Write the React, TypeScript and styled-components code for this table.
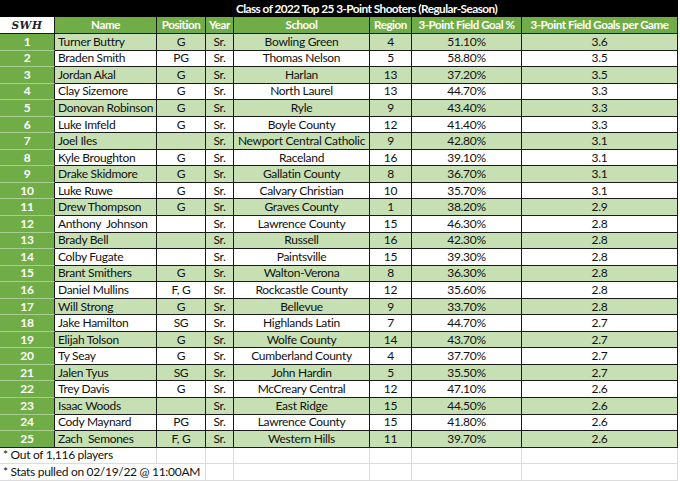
import React from "react";
import styled, { createGlobalStyle, css } from "styled-components";

const Global = createGlobalStyle`
  html, body { margin: 0; padding: 0; background: #ffffff; }
  body { font-family: "Lato", "Open Sans", "Liberation Sans", sans-serif; }
`;

const COLS = "55px 102px 49px 28px 136px 42px 110px 156px";
const ROWS = "17px 17px repeat(25, 16.56px) 16.5px 16.5px";

const Sheet = styled.div`
  display: grid;
  grid-template-columns: ${COLS};
  grid-template-rows: ${ROWS};
  width: 680px;
  height: 481px;
  overflow: hidden;
  font-size: 12px;
  letter-spacing: -0.3px;
  color: #111;
`;

type CellProps = {
  $bg?: string;
  $align?: "left" | "center";
  $bold?: boolean;
  $color?: string;
  $span?: number;
  $light?: boolean;
  $rankSep?: boolean;
};

const Cell = styled.div<CellProps>`
  box-sizing: border-box;
  display: flex;
  align-items: center;
  justify-content: ${(p) => (p.$align === "left" ? "flex-start" : "center")};
  padding: 0 ${(p) => (p.$align === "left" ? "3px" : "0")};
  background: ${(p) => p.$bg || "#ffffff"};
  color: ${(p) => p.$color || "#111"};
  font-weight: ${(p) => (p.$bold ? 700 : 400)};
  white-space: pre;
  overflow: visible;
  line-height: 1;
  border-right: 1px solid #1a1a1a;
  border-bottom: 1px solid ${(p) => (p.$rankSep ? "#a8cf90" : "#1a1a1a")};
  ${(p) => p.$span && css`grid-column: span ${p.$span};`}
  ${(p) =>
    p.$light &&
    css`
      border-right: 1px solid #dcdcdc;
      border-bottom: 1px solid #dcdcdc;
    `}
`;

const HeadCell = styled(Cell)`
  background: #70ad47;
  color: #ffffff;
  font-weight: 700;
  font-size: 11.6px;
  letter-spacing: -0.45px;
`;

const RankCell = styled(Cell)`
  background: #70ad47;
  color: #ffffff;
  font-weight: 700;
`;

const TitleBar = styled.div`
  box-sizing: border-box;
  grid-column: 2 / -1;
  background: #000;
  color: #fff;
  font-weight: 700;
  font-size: 11.8px;
  letter-spacing: -0.55px;
  display: flex;
  align-items: center;
  justify-content: center;
  border-bottom: 1px solid #000;
`;

const TitleLead = styled.div`
  background: #000;
`;

const Logo = styled(Cell)`
  font-family: "DejaVu Serif", "Liberation Serif", serif;
  font-style: italic;
  font-weight: 700;
  font-size: 10.5px;
  letter-spacing: 0.6px;
  color: #222;
  background: #fff;
`;

const Note = styled(Cell)`
  justify-content: flex-start;
  padding-left: 3px;
`;

const LIGHT = "#c6e0b4";

type Row = [string, string, string, string, number, string, string];

const data: Row[] = [
  ["Turner Buttry", "G", "Sr.", "Bowling Green", 4, "51.10%", "3.6"],
  ["Braden Smith", "PG", "Sr.", "Thomas Nelson", 5, "58.80%", "3.5"],
  ["Jordan Akal", "G", "Sr.", "Harlan", 13, "37.20%", "3.5"],
  ["Clay Sizemore", "G", "Sr.", "North Laurel", 13, "44.70%", "3.3"],
  ["Donovan Robinson", "G", "Sr.", "Ryle", 9, "43.40%", "3.3"],
  ["Luke Imfeld", "G", "Sr.", "Boyle County", 12, "41.40%", "3.3"],
  ["Joel Iles", "", "Sr.", "Newport Central Catholic", 9, "42.80%", "3.1"],
  ["Kyle Broughton", "G", "Sr.", "Raceland", 16, "39.10%", "3.1"],
  ["Drake Skidmore", "G", "Sr.", "Gallatin County", 8, "36.70%", "3.1"],
  ["Luke Ruwe", "G", "Sr.", "Calvary Christian", 10, "35.70%", "3.1"],
  ["Drew Thompson", "G", "Sr.", "Graves County", 1, "38.20%", "2.9"],
  ["Anthony  Johnson", "", "Sr.", "Lawrence County", 15, "46.30%", "2.8"],
  ["Brady Bell", "", "Sr.", "Russell", 16, "42.30%", "2.8"],
  ["Colby Fugate", "", "Sr.", "Paintsville", 15, "39.30%", "2.8"],
  ["Brant Smithers", "G", "Sr.", "Walton-Verona", 8, "36.30%", "2.8"],
  ["Daniel Mullins", "F, G", "Sr.", "Rockcastle County", 12, "35.60%", "2.8"],
  ["Will Strong", "G", "Sr.", "Bellevue", 9, "33.70%", "2.8"],
  ["Jake Hamilton", "SG", "Sr.", "Highlands Latin", 7, "44.70%", "2.7"],
  ["Elijah Tolson", "G", "Sr.", "Wolfe County", 14, "43.70%", "2.7"],
  ["Ty Seay", "G", "Sr.", "Cumberland County", 4, "37.70%", "2.7"],
  ["Jalen Tyus", "SG", "Sr.", "John Hardin", 5, "35.50%", "2.7"],
  ["Trey Davis", "G", "Sr.", "McCreary Central", 12, "47.10%", "2.6"],
  ["Isaac Woods", "", "Sr.", "East Ridge", 15, "44.50%", "2.6"],
  ["Cody Maynard", "PG", "Sr.", "Lawrence County", 15, "41.80%", "2.6"],
  ["Zach  Semones", "F, G", "Sr.", "Western Hills", 11, "39.70%", "2.6"],
];

const headers = [
  "Name",
  "Position",
  "Year",
  "School",
  "Region",
  "3-Point Field Goal %",
  "3-Point Field Goals per Game",
];

export default function App() {
  return (
    <>
      <Global />
      <Sheet>
        <TitleLead />
        <TitleBar>Class of 2022 Top 25 3-Point Shooters (Regular-Season)</TitleBar>

        <Logo>SWH</Logo>
        {headers.map((h) => (
          <HeadCell key={h}>{h}</HeadCell>
        ))}

        {data.map((r, i) => {
          const bg = i % 2 === 0 ? LIGHT : "#ffffff";
          return (
            <React.Fragment key={i}>
              <RankCell $rankSep={i < data.length - 1}>{i + 1}</RankCell>
              <Cell $bg={bg} $align="left">{r[0]}</Cell>
              <Cell $bg={bg}>{r[1]}</Cell>
              <Cell $bg={bg}>{r[2]}</Cell>
              <Cell $bg={bg}>{r[3]}</Cell>
              <Cell $bg={bg}>{r[4]}</Cell>
              <Cell $bg={bg}>{r[5]}</Cell>
              <Cell $bg={bg}>{r[6]}</Cell>
            </React.Fragment>
          );
        })}

        <Note $light $span={2}>* Out of 1,116 players</Note>
        {[0, 1, 2, 3, 4, 5].map((k) => (
          <Cell key={"a" + k} $light />
        ))}
        <Note $light $span={3}>* Stats pulled on 02/19/22 @ 11:00AM</Note>
        {[0, 1, 2, 3, 4].map((k) => (
          <Cell key={"b" + k} $light />
        ))}
      </Sheet>
    </>
  );
}
